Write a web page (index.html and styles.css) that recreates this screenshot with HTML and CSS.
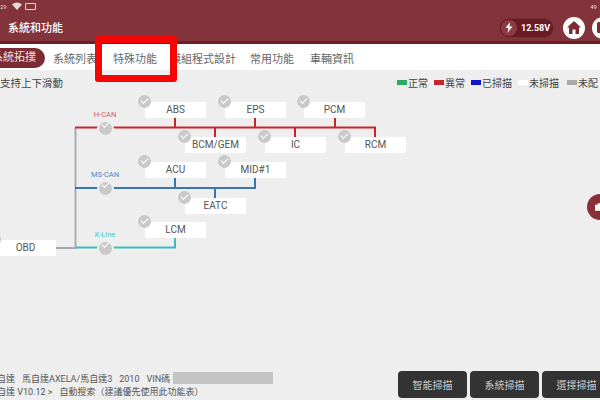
FILE: index.html
```html
<!DOCTYPE html>
<html>
    <head>
        <title>系統和功能</title>
        <meta charset="utf-8">
        <link rel="stylesheet" href="styles.css">
    </head>
    <body>

        <div class="header">
            <div class="statusbar">
                <span class="clock">29</span>
                <svg class="wifi" width="10" height="8" viewBox="0 0 10 8"><path d="M0 2.5 Q5 -1.5 10 2.5 L5 8 Z" fill="#e8d8d8"/></svg>
                <span class="batt"></span>
                <span class="percent">49</span>
            </div>
            <div class="titlebar">
                <h4 class="title">系統和功能</h4>
                <div class="volt">
                    <span class="bolt">
                        <svg width="8" height="11" viewBox="0 0 8 11"><path d="M5 0 L0.5 6 H3.5 L2.5 11 L7.5 4.5 H4.5 Z" fill="#fff"/></svg>
                    </span>
                    <span class="voltval">12.58V</span>
                </div>
                <div class="roundbtn">
                    <svg width="14" height="13" viewBox="0 0 14 13"><path d="M7 0 L14 6.5 H12 V13 H8.5 V8.5 H5.5 V13 H2 V6.5 H0 Z" fill="#7d2b33"/></svg>
                </div>
                <div class="roundbtn">
                    <svg width="14" height="13" viewBox="0 0 14 13"><rect x="1" y="1" width="12" height="11" rx="1.5" fill="#7d2b33"/></svg>
                </div>
            </div>
        </div>

        <div class="tabs">
            <div class="tab active">系統拓撲</div>
            <div class="tab">系統列表</div>
            <div class="tab">特殊功能</div>
            <div class="tab module">模組程式設計</div>
            <div class="tab">常用功能</div>
            <div class="tab">車輛資訊</div>
        </div>

        <div class="main">
            <div class="toprow">
                <div class="hint">支持上下滑動</div>
                <div class="legend">
                    <span class="item"><i class="swatch green"></i>正常</span>
                    <span class="item"><i class="swatch red"></i>異常</span>
                    <span class="item"><i class="swatch blue"></i>已掃描</span>
                    <span class="item"><i class="swatch white"></i>未掃描</span>
                    <span class="item"><i class="swatch grey"></i>未配</span>
                </div>
            </div>

            <svg class="wires" width="600" height="300" viewBox="0 0 600 300">
                <path class="w-grey" d="M56 178 H75.5 V57.5"/>
                <path class="w-red" d="M75 57.5 H375 V68 M175 48 V57.5 M255 48 V57.5 M335 48 V57.5 M215 57.5 V67 M295 57.5 V68"/>
                <path class="w-blue" d="M75 118 H255 V107 M175 107 V118 M215 118 V128"/>
                <path class="w-teal" d="M76 177.5 H175 V168"/>
            </svg>

            <div class="bus hcan">
                <span class="buslabel">H-CAN</span>
                <span class="check"></span>
            </div>
            <div class="bus mscan">
                <span class="buslabel">MS-CAN</span>
                <span class="check"></span>
            </div>
            <div class="bus kline">
                <span class="buslabel">K-Line</span>
                <span class="check"></span>
            </div>

            <div class="node n-abs"><span class="check"></span>ABS</div>
            <div class="node n-eps"><span class="check"></span>EPS</div>
            <div class="node n-pcm"><span class="check"></span>PCM</div>
            <div class="node n-bcm"><span class="check"></span>BCM/GEM</div>
            <div class="node n-ic"><span class="check"></span>IC</div>
            <div class="node n-rcm"><span class="check"></span>RCM</div>
            <div class="node n-acu"><span class="check"></span>ACU</div>
            <div class="node n-mid"><span class="check"></span>MID#1</div>
            <div class="node n-eatc"><span class="check"></span>EATC</div>
            <div class="node n-lcm"><span class="check"></span>LCM</div>
            <div class="node n-obd"><span class="check"></span>OBD</div>

            <div class="camera">
                <svg width="9" height="8" viewBox="0 0 12 10"><path d="M0 2 H3 L4 0 H8 L9 2 H12 V10 H0 Z" fill="#fff"/></svg>
            </div>
        </div>

        <div class="footer">
            <div class="carinfo">
                <div class="line">自達<span class="sp"></span>馬自達AXELA/馬自達3<span class="sp"></span>2010<span class="sp"></span>VIN碼<span class="vin"></span></div>
                <div class="line">自達 V10.12 &gt;<span class="sp"></span>自動搜索（建議優先使用此功能表）</div>
            </div>
            <div class="actions">
                <div class="btn">智能掃描</div>
                <div class="btn">系統掃描</div>
                <div class="btn">選擇掃描</div>
            </div>
        </div>

        <div class="highlight"></div>

    </body>
</html>
```

FILE: styles.css
```css
html{
    overflow: hidden;
}

body{
    font-family: "Roboto", "Noto Sans CJK TC", sans-serif;
    background-color: #eeeeee;

    width: 600px;
    height: 400px;
    overflow: hidden;

    display: flex;
    flex-direction: column;

    padding: 0;
    margin: 0;

    position: relative;
}

.header{
    height: 41px;
    flex: none;
    background-color: #83343a;
    border-bottom: 3px solid #6b1f27;
    color: #fff;
}

.statusbar{
    height: 10px;
    display: flex;
    align-items: center;
    font-size: 6px;
    padding-top: 1px;
    color: #e8d8d8;
    position: relative;
}

.statusbar .wifi{
    margin-left: 5px;
}

.statusbar .batt{
    width: 9px;
    height: 5px;
    border: 1px solid #e8d8d8;
    border-radius: 1px;
    margin-left: 3px;
}

.statusbar .percent{
    margin-left: auto;
    margin-right: 3px;
}

.titlebar{
    height: 31px;
    display: flex;
    align-items: center;
    padding-left: 8px;
}

.title{
    margin: 0;
    font-size: 11px;
    font-weight: 500;
    flex: 1;
    padding-top: 1px;
}

.volt{
    width: 53px;
    height: 18px;
    border-radius: 9px;
    background-color: #6a1c25;
    box-shadow: 0 0 2px rgba(0,0,0,0.3);

    display: flex;
    align-items: center;

    margin-right: 10px;
    margin-top: 2px;
}

.bolt{
    width: 16px;
    height: 16px;
    border-radius: 50%;
    background-color: #8d3a44;

    display: flex;
    justify-content: center;
    align-items: center;

    margin-left: 1px;
}

.voltval{
    font-size: 9px;
    font-weight: 700;
    margin-left: 4px;
}

.roundbtn{
    width: 22px;
    height: 22px;
    flex: none;
    border-radius: 50%;
    background-color: #fff;

    display: flex;
    justify-content: center;
    align-items: center;

    margin-right: 7px;
    margin-top: 2px;
}

.roundbtn:last-child{
    margin-right: -14px;
}

.tabs{
    height: 26px;
    flex: none;
    background-color: #fff;

    display: flex;
    align-items: center;
    gap: 16px;

    font-size: 11px;
    color: #666;
}

.tab{
    white-space: nowrap;
    margin-top: 1px;
}

.tab.active{
    background-color: #7d2b33;
    color: #f0e0e0;
    height: 20px;
    line-height: 20px;
    padding: 0 9px 0 10px;
    border-radius: 10px;
    margin-left: -18px;
    margin-right: -8px;
}

.tab.module{
    margin-left: -3px;
    margin-right: -2px;
}

.main{
    flex: 1;
    position: relative;
}

.toprow{
    display: flex;
    justify-content: space-between;
    padding-top: 5px;
    font-size: 10.5px;
    color: #444;
}

.legend{
    display: flex;
    gap: 6px;
    position: absolute;
    left: 397px;
    top: 5px;
    font-size: 10px;
    white-space: nowrap;
}

.legend .item{
    display: flex;
    align-items: center;
}

.swatch{
    width: 10px;
    height: 5px;
    margin-right: 1px;
}

.swatch.green{ background-color: #2aa866; }
.swatch.red{ background-color: #c8242c; }
.swatch.blue{ background-color: #1014c8; }
.swatch.white{ background-color: #fff; }
.swatch.grey{ background-color: #aaa; margin-left: 2px; }

.wires{
    position: absolute;
    left: 0;
    top: 0;
}

.wires path{
    fill: none;
    stroke-width: 2;
}

.w-grey{ stroke: #ababab; }
.w-red{ stroke: #c8242c; }
.w-blue{ stroke: #3a74b5; }
.w-teal{ stroke: #3dbcc0; }

.node{
    width: 61px;
    height: 16px;
    background-color: #fff;
    border-radius: 2px;
    font-size: 10px;
    line-height: 16px;
    text-align: center;
    color: #555;
    position: absolute;
}

.node .check{
    position: absolute;
    left: -7px;
    top: -7px;
}

.n-abs{ left: 145px; top: 32px; }
.n-eps{ left: 225px; top: 32px; }
.n-pcm{ left: 304px; top: 32px; }
.n-bcm{ left: 185px; top: 67px; }
.n-ic{ left: 265px; top: 67px; }
.n-rcm{ left: 345px; top: 67px; }
.n-acu{ left: 145px; top: 92px; }
.n-mid{ left: 225px; top: 92px; }
.n-eatc{ left: 185px; top: 128px; }
.n-lcm{ left: 145px; top: 152px; }
.n-obd{ left: -5px; top: 170px; }

.check{
    width: 13px;
    height: 13px;
    border-radius: 50%;
    background-color: #c9c9c9;
    display: block;
}

.check::after{
    content: "";
    display: block;
    width: 6px;
    height: 3px;
    border-left: 1.5px solid #fff;
    border-bottom: 1.5px solid #fff;
    transform: rotate(-45deg);
    margin: 3px 0 0 3px;
}

.bus{
    position: absolute;
    left: 83px;
    width: 44px;
    text-align: center;
}

.bus .check{
    margin: 0 auto;
    box-shadow: 0 0 0 2px #eeeeee;
}

.buslabel{
    display: block;
    font-size: 7.5px;
    line-height: 9px;
    margin-bottom: 1px;
}

.hcan{ top: 40px; color: #d0605f; }
.mscan{ top: 100px; color: #4f86bd; }
.kline{ top: 160px; color: #4cc3c6; }

.camera{
    width: 26px;
    height: 26px;
    border-radius: 50%;
    background-color: #8a2e38;
    position: absolute;
    left: 587px;
    top: 124px;

    display: flex;
    align-items: center;
    padding-left: 8px;
    box-sizing: border-box;
}

.footer{
    height: 30px;
    flex: none;
    display: flex;
    justify-content: space-between;
    align-items: center;
    position: relative;
}

.carinfo{
    font-size: 9px;
    line-height: 13px;
    color: #555;
    padding-top: 1px;
    margin-left: -3px;
    white-space: nowrap;
}

.sp{
    display: inline-block;
    width: 7px;
}

.vin{
    display: inline-block;
    width: 100px;
    height: 12px;
    background-color: #c4c4c4;
    margin-left: 3px;
    vertical-align: -2px;
}

.actions{
    display: flex;
    gap: 3px;
    margin-right: -11px;
    margin-top: -2px;
}

.btn{
    width: 69px;
    height: 27px;
    background-color: #333;
    color: #ccc;
    border-radius: 4px;
    font-size: 10px;

    display: flex;
    justify-content: center;
    align-items: center;
}

.highlight{
    width: 82px;
    height: 46px;
    box-sizing: border-box;
    border: 7.5px solid #f50505;
    border-radius: 3px;
    position: absolute;
    left: 95px;
    top: 36px;
}
```
